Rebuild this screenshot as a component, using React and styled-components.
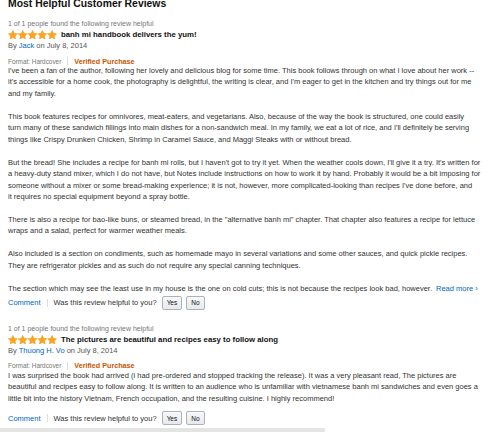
import styled, { createGlobalStyle } from 'styled-components';

const GlobalStyle = createGlobalStyle`
  body {
    margin: 0;
    background: #fff;
    font-family: "Liberation Sans", Arial, sans-serif;
    color: #333;
    overflow: hidden;
  }
`;

const reviews = [
  {
    helpful: '1 of 1 people found the following review helpful',
    title: 'banh mi handbook delivers the yum!',
    author: 'Jack',
    date: 'July 8, 2014',
    readMore: true,
    paragraphs: [
      [
        "I've been a fan of the author, following her lovely and delicious blog for some time. This book follows through on what I love about her work --",
        "it's accessible for a home cook, the photography is delightful, the writing is clear, and I'm eager to get in the kitchen and try things out for me",
        'and my family.',
      ],
      [
        'This book features recipes for omnivores, meat-eaters, and vegetarians. Also, because of the way the book is structured, one could easily',
        "turn many of these sandwich fillings into main dishes for a non-sandwich meal. In my family, we eat a lot of rice, and I'll definitely be serving",
        'things like Crispy Drunken Chicken, Shrimp in Caramel Sauce, and Maggi Steaks with or without bread.',
      ],
      [
        "But the bread! She includes a recipe for banh mi rolls, but I haven't got to try it yet. When the weather cools down, I'll give it a try. It's written for",
        'a heavy-duty stand mixer, which I do not have, but Notes include instructions on how to work it by hand. Probably it would be a bit imposing for',
        "someone without a mixer or some bread-making experience; it is not, however, more complicated-looking than recipes I've done before, and",
        'it requires no special equipment beyond a spray bottle.',
      ],
      [
        'There is also a recipe for bao-like buns, or steamed bread, in the "alternative banh mi" chapter. That chapter also features a recipe for lettuce',
        'wraps and a salad, perfect for warmer weather meals.',
      ],
      [
        'Also included is a section on condiments, such as homemade mayo in several variations and some other sauces, and quick pickle recipes.',
        'They are refrigerator pickles and as such do not require any special canning techniques.',
      ],
      [
        'The section which may see the least use in my house is the one on cold cuts; this is not because the recipes look bad, however.',
      ],
    ],
  },
  {
    helpful: '1 of 1 people found the following review helpful',
    title: 'The pictures are beautiful and recipes easy to follow along',
    author: 'Thuong H. Vo',
    date: 'July 8, 2014',
    readMore: false,
    paragraphs: [
      [
        'I was surprised the book had arrived (i had pre-ordered and stopped tracking the release). It was a very pleasant read, The pictures are',
        'beautiful and recipes easy to follow along. It is written to an audience who is unfamiliar with vietnamese banh mi sandwiches and even goes a',
        'little bit into the history Vietnam, French occupation, and the resulting cuisine. I highly recommend!',
      ],
    ],
  },
];

function Stars() {
  const star = 'M5 0.3l1.45 3.05 3.3.4-2.45 2.3.65 3.3L5 7.7 2.05 9.35l.65-3.3L.25 3.75l3.3-.4z';
  return (
    <StarSvg viewBox="0 0 50 10" width="49" height="9.8">
      {[0, 1, 2, 3, 4].map(i => (
        <path key={i} d={star} transform={`translate(${i * 10} 0)`} />
      ))}
    </StarSvg>
  );
}

function Review({ review, first }) {
  return (
    <ReviewBlock $first={first}>
      <Helpful>{review.helpful}</Helpful>
      <TitleRow>
        <Stars />
        <ReviewTitle>{review.title}</ReviewTitle>
      </TitleRow>
      <Byline>
        By <Link>{review.author}</Link> on {review.date}
      </Byline>
      <FormatRow>
        <span>Format: Hardcover</span>
        <Divider />
        <Verified>Verified Purchase</Verified>
      </FormatRow>
      <Body>
        {review.paragraphs.map((lines, p) => (
          <Paragraph key={p}>
            {lines.map((line, i) => (
              <span key={i}>
                {i > 0 && <br />}
                {line}
              </span>
            ))}
            {review.readMore && p === review.paragraphs.length - 1 && (
              <ReadMore>Read more ›</ReadMore>
            )}
          </Paragraph>
        ))}
      </Body>
      <ActionRow $gap={review.readMore ? 1 : 6}>
        <Link>Comment</Link>
        <Divider />
        <span>Was this review helpful to you?</span>
        <Buttons>
          <VoteButton>Yes</VoteButton>
          <VoteButton>No</VoteButton>
        </Buttons>
      </ActionRow>
    </ReviewBlock>
  );
}

export default function App() {
  return (
    <>
      <GlobalStyle />
      <Page>
        <Heading>Most Helpful Customer Reviews</Heading>
        {reviews.map((r, i) => (
          <Review key={i} review={r} first={i === 0} />
        ))}
        <BottomBar />
      </Page>
    </>
  );
}

const Page = styled.div`
padding: 0 8px;
height: 432px;
overflow: hidden;
`;

const Heading = styled.h2`
margin: -2px 0 0;
font-size: 10.4px;
line-height: 12px;
font-weight: bold;
color: #111;
`;

const ReviewBlock = styled.div`
margin-top: ${p => (p.$first ? '9px' : '13px')};
`;

const Helpful = styled.div`
font-size: 7px;
line-height: 10px;
color: #767676;
`;

const TitleRow = styled.div`
display: flex;
align-items: center;
gap: 4px;
height: 11px;
`;

const StarSvg = styled.svg`
display: block;
fill: #ffa41c;
stroke: #e08a12;
stroke-width: 0.35;
`;

const ReviewTitle = styled.span`
font-size: 7.8px;
font-weight: bold;
color: #111;
`;

const Byline = styled.div`
font-size: 7.5px;
line-height: 11px;
color: #555;
`;

const Link = styled.a`
color: #0066c0;
cursor: pointer;
`;

const FormatRow = styled.div`
display: flex;
align-items: center;
margin-top: 5px;
height: 10px;
font-size: 6.4px;
color: #767676;
`;

const Divider = styled.i`
display: inline-block;
width: 1px;
height: 8px;
margin: 0 6px;
background: #ddd;
`;

const Verified = styled.span`
font-size: 7.2px;
font-weight: bold;
color: #c45500;
`;

const Body = styled.div`
margin-top: -1px;
font-size: 7.5px;
line-height: 11.45px;
color: #333;
white-space: nowrap;
`;

const Paragraph = styled.p`
margin: 0 0 11.45px;

&:last-child {
  margin-bottom: 0;
}
`;

const ReadMore = styled.a`
margin-left: 4px;
color: #0066c0;
`;

const ActionRow = styled.div`
display: flex;
align-items: center;
height: 16px;
margin-top: ${p => p.$gap}px;
font-size: 7.5px;
color: #333;
`;

const Buttons = styled.div`
display: flex;
gap: 4px;
margin-left: 5px;
`;

const VoteButton = styled.button`
height: 14px;
padding: 0 4px;
font-family: "Liberation Sans", Arial, sans-serif;
font-size: 6.5px;
color: #111;
background: linear-gradient(#f7f8fa, #e7e9ec);
border: 1px solid #adb1b8;
border-radius: 2px;
box-shadow: 0 1px 0 rgba(255, 255, 255, 0.6) inset;
cursor: pointer;
`;

const BottomBar = styled.div`
margin: 2px 0 0 -8px;
width: 325px;
height: 6px;
background: #e4e4e4;
`;
